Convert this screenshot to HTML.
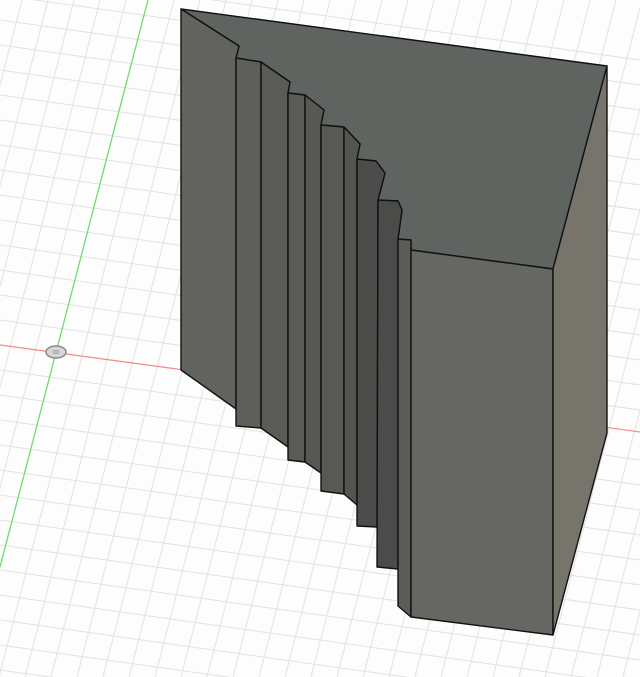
<!DOCTYPE html>
<html><head><style>html,body{margin:0;padding:0;background:#fff;width:640px;height:677px;overflow:hidden}svg{display:block}</style></head>
<body>
<svg width="640" height="677" viewBox="0 0 640 677" xmlns="http://www.w3.org/2000/svg">
<rect width="640" height="677" fill="#fdfdfd"/>
<g stroke="#e2e2e2" stroke-width="1" fill="none">
<path d="M22 0 L-153 677 M48 0 L-127 677 M74 0 L-101 677 M100 0 L-75 677 M126 0 L-49 677 M174 0 L-1 677 M200 0 L25 677 M226 0 L51 677 M252 0 L77 677 M278 0 L103 677 M304 0 L129 677 M330 0 L155 677 M356 0 L181 677 M382 0 L207 677 M408 0 L233 677 M434 0 L259 677 M460 0 L285 677 M486 0 L311 677 M512 0 L337 677 M538 0 L363 677 M564 0 L389 677 M590 0 L415 677 M616 0 L441 677 M642 0 L467 677 M668 0 L493 677 M694 0 L519 677 M720 0 L545 677 M746 0 L571 677 M772 0 L597 677 M798 0 L623 677 M824 0 L649 677"/>
<path d="M0 -30 L640 60 M0 -5 L640 85 M0 20 L640 110 M0 45 L640 135 M0 70 L640 160 M0 95 L640 185 M0 120 L640 210 M0 145 L640 235 M0 170 L640 260 M0 195 L640 285 M0 220 L640 310 M0 245 L640 335 M0 270 L640 360 M0 295 L640 385 M0 320 L640 410 M0 370 L640 460 M0 395 L640 485 M0 420 L640 510 M0 445 L640 535 M0 470 L640 560 M0 495 L640 585 M0 520 L640 610 M0 545 L640 635 M0 570 L640 660 M0 595 L640 685 M0 620 L640 710 M0 645 L640 735 M0 670 L640 760"/>
</g>
<line x1="148" y1="0" x2="0" y2="567" stroke="#6fdc6f" stroke-width="1.3"/>
<line x1="0" y1="345" x2="640" y2="432" stroke="#f08a8a" stroke-width="1.2"/>
<ellipse cx="56" cy="352" rx="10" ry="6" fill="#d8d8d8" stroke="#888" stroke-width="1.5"/>
<ellipse cx="56" cy="352" rx="4" ry="2.5" fill="#bbb"/>
<g stroke="#111" stroke-width="1.4" stroke-linejoin="round">
<polygon fill="#5f6461" points="181,9 607,66 553,269 411,250 411,240 398,239 402,210 398,201 378,200 385,173 376,161 357,159 360,144 344,127 321,125 324,110 305,95 288,93 290,82 261,62 236,58 239,46"/>
<polygon fill="#62625e" points="181,9 239,46 236,58 236,409 181,370"/>
<polygon fill="#5e5e5b" points="236,58 261,62 261,428 236,426"/>
<polygon fill="#5a5a57" points="261,62 290,82 288,93 288,447 261,428"/>
<polygon fill="#5a5a57" points="288,93 305,95 305,462 288,460"/>
<polygon fill="#575754" points="305,95 324,110 321,125 321,473 305,462"/>
<polygon fill="#585855" points="321,125 344,127 344,494 321,491"/>
<polygon fill="#545451" points="344,127 360,144 357,159 357,505 344,494"/>
<polygon fill="#4c4c4a" points="357,159 376,161 385,173 378,200 377,527 357,526"/>
<polygon fill="#4b4b49" points="378,200 398,201 402,210 398,239 398,569 377,567"/>
<polygon fill="#5b5b58" points="398,239 411,240 411,617 398,606"/>
<polygon fill="#666662" points="411,250 553,269 553,635 411,617"/>
<polygon fill="#76746b" points="553,269 607,66 607,433 553,635"/>
</g>
</svg>
</body></html>
